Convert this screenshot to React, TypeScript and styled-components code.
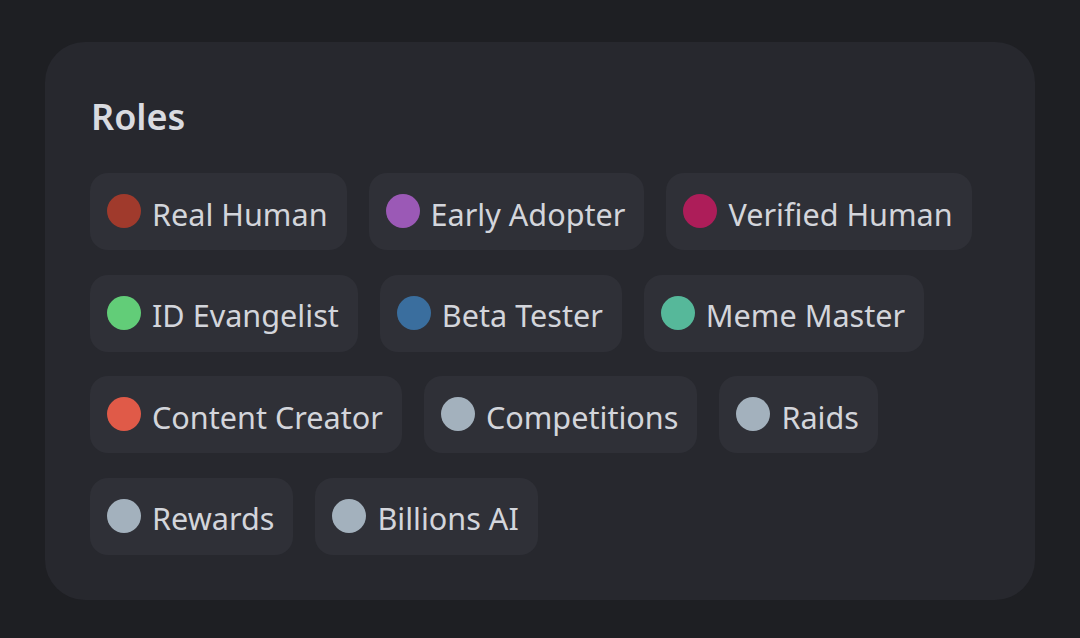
import React from "react";
import styled, { createGlobalStyle } from "styled-components";

const GlobalStyle = createGlobalStyle`
  html, body {
    margin: 0;
    padding: 0;
    background: #1e1f23;
  }
  body {
    font-family: "Noto Sans", "Open Sans", sans-serif;
  }
`;

const Page = styled.div`
  width: 1080px;
  height: 638px;
  box-sizing: border-box;
  padding: 42px 45px 38px 45px;
  background: #1e1f23;
`;

const Card = styled.div`
  width: 990px;
  height: 558px;
  box-sizing: border-box;
  background: #27282e;
  border-radius: 40px;
  padding: 57px 46px 45px 45px;
`;

const Title = styled.h2`
  margin: 0 0 38px 1px;
  font-size: 36px;
  font-weight: 600;
  line-height: 1;
  color: #d9dbe0;
`;

const RoleList = styled.div`
  display: flex;
  flex-wrap: wrap;
  column-gap: 22px;
  row-gap: 24.5px;
  width: 900px;
`;

const Pill = styled.div`
  display: flex;
  align-items: center;
  gap: 11px;
  height: 77px;
  box-sizing: border-box;
  padding: 0 19px 0 17px;
  background: #2f3037;
  border-radius: 18px;
`;

const Dot = styled.span<{ $color: string }>`
  width: 34px;
  height: 34px;
  border-radius: 50%;
  background: ${(p) => p.$color};
  flex-shrink: 0;
  margin-top: -1px;
`;

const Label = styled.span`
  font-size: 30.6px;
  color: #d3d5db;
  line-height: 1;
  margin-top: 5px;
`;

const roles: [string, string][] = [
  ["Real Human", "#a03a2c"],
  ["Early Adopter", "#9b59b6"],
  ["Verified Human", "#ad1d59"],
  ["ID Evangelist", "#62cd78"],
  ["Beta Tester", "#3a6e9e"],
  ["Meme Master", "#56b89a"],
  ["Content Creator", "#e05a48"],
  ["Competitions", "#a3b1bd"],
  ["Raids", "#a3b1bd"],
  ["Rewards", "#a3b1bd"],
  ["Billions AI", "#a3b1bd"],
];

const App = () => {
  return (
    <>
      <GlobalStyle />
      <Page>
        <Card>
          <Title>Roles</Title>
          <RoleList>
            {roles.map(([name, color]) => (
              <Pill key={name}>
                <Dot $color={color} />
                <Label>{name}</Label>
              </Pill>
            ))}
          </RoleList>
        </Card>
      </Page>
    </>
  );
};

export default App;
